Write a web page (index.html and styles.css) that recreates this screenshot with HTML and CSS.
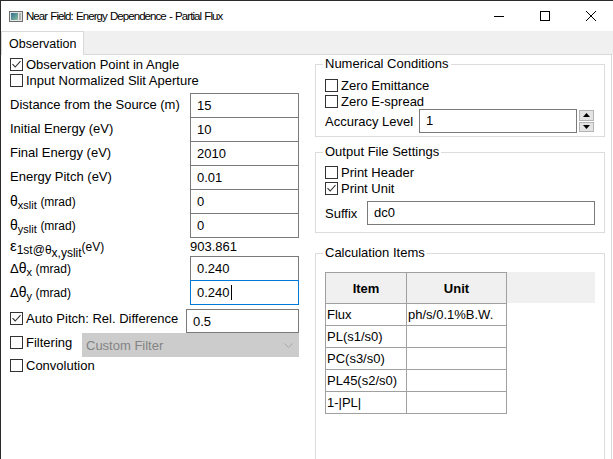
FILE: index.html
```html
<!DOCTYPE html>
<html>
<head>
<meta charset="utf-8">
<link rel="stylesheet" href="styles.css">
</head>
<body>
<div class="window">
  <div class="titlebar">
    <svg class="appicon" width="14" height="11" viewBox="0 0 14 11">
      <defs><linearGradient id="ig" x1="0" y1="0" x2="1" y2="1"><stop offset="0" stop-color="#2f6f8f"/><stop offset="1" stop-color="#8cc0a0"/></linearGradient></defs>
      <rect x="0.5" y="0.5" width="13" height="10" fill="#e6e6e6" stroke="#6d6d6d"/>
      <rect x="2" y="2" width="7" height="7" fill="url(#ig)"/>
      <rect x="10" y="2" width="2" height="7" fill="#b0b0b0"/>
    </svg>
    <span class="title">Near Field: Energy Dependence - Partial Flux</span>
    <div class="controls">
      <span class="ctl"><svg width="10" height="10" viewBox="0 0 10 10"><line x1="0" y1="5.5" x2="10" y2="5.5" stroke="#000"/></svg></span>
      <span class="ctl"><svg width="10" height="10" viewBox="0 0 10 10"><rect x="0.5" y="0.5" width="9" height="9" fill="none" stroke="#000"/></svg></span>
      <span class="ctl"><svg width="10" height="10" viewBox="0 0 10 10"><path d="M0 0 L10 10 M10 0 L0 10" stroke="#000" stroke-width="1"/></svg></span>
    </div>
  </div>
  <div class="tabstrip">
    <div class="tab">Observation</div>
    <div class="tabfill"></div>
  </div>
  <div class="panel">
    <div class="left">
      <label class="check"><span class="cb"><svg viewBox="0 0 11 11"><polyline points="1.5,5.2 4.2,8 9.5,2.2" fill="none" stroke="#333" stroke-width="1.1"/></svg></span>Observation Point in Angle</label>
      <label class="check"><span class="cb"></span>Input Normalized Slit Aperture</label>
      <div class="fields">
        <span class="lbl">Distance from the Source (m)</span><span class="input">15</span>
        <span class="lbl">Initial Energy (eV)</span><span class="input">10</span>
        <span class="lbl">Final Energy (eV)</span><span class="input">2010</span>
        <span class="lbl">Energy Pitch (eV)</span><span class="input">0.01</span>
        <span class="lbl"><span class="g">θ</span><sub class="s11">xslit</sub> <span class="sm">(mrad)</span></span><span class="input">0</span>
        <span class="lbl"><span class="g">θ</span><sub class="s11">yslit</sub> <span class="sm">(mrad)</span></span><span class="input">0</span>
        <span class="lbl"><span class="eps">ε</span><sub class="s12">1st@θ<sub class="s12">x,yslit</sub></sub><span class="sm">(eV)</span></span><span class="val">903.861</span>
        <span class="lbl">Δ<span class="g">θ</span><sub class="s11">x</sub> <span class="sm">(mrad)</span></span><span class="input">0.240</span>
        <span class="lbl">Δ<span class="g">θ</span><sub class="s11">y</sub> <span class="sm">(mrad)</span></span><span class="input focus">0.240<span class="caret"></span></span>
      </div>
      <div class="auto-row">
        <label class="check auto"><span class="cb"><svg viewBox="0 0 11 11"><polyline points="1.5,5.2 4.2,8 9.5,2.2" fill="none" stroke="#333" stroke-width="1.1"/></svg></span>Auto Pitch: Rel. Difference</label>
        <span class="input auto-in">0.5</span>
      </div>
      <div class="filter-row">
        <label class="check filt"><span class="cb"></span>Filtering</label>
        <span class="select">Custom Filter<svg class="chev" width="9" height="5" viewBox="0 0 9 5"><polyline points="0.5,0.5 4.5,4.5 8.5,0.5" fill="none" stroke="#a8a8a8"/></svg></span>
      </div>
      <label class="check"><span class="cb"></span>Convolution</label>
    </div>
    <div class="right">
      <fieldset class="group g1">
        <legend>Numerical Conditions</legend>
        <label class="check"><span class="cb"></span>Zero Emittance</label>
        <label class="check"><span class="cb"></span>Zero E-spread</label>
        <div class="acc-row">
          <span class="acc-lbl">Accuracy Level</span>
          <span class="input acc-in">1</span>
          <span class="spin">
            <span class="spbtn"><svg width="7" height="4" viewBox="0 0 7 4"><polygon points="0,4 3.5,0 7,4" fill="#000"/></svg></span>
            <span class="spbtn"><svg width="7" height="4" viewBox="0 0 7 4"><polygon points="0,0 3.5,4 7,0" fill="#000"/></svg></span>
          </span>
        </div>
      </fieldset>
      <fieldset class="group g2">
        <legend>Output File Settings</legend>
        <label class="check"><span class="cb"></span>Print Header</label>
        <label class="check"><span class="cb"><svg viewBox="0 0 11 11"><polyline points="1.5,5.2 4.2,8 9.5,2.2" fill="none" stroke="#333" stroke-width="1.1"/></svg></span>Print Unit</label>
        <div class="suffix-row">
          <span class="suf-lbl">Suffix</span>
          <span class="input suf-in">dc0</span>
        </div>
      </fieldset>
      <fieldset class="group g3">
        <legend>Calculation Items</legend>
        <div class="tablewrap">
          <table class="items">
            <thead>
              <tr><th class="c1">Item</th><th class="c2">Unit</th></tr>
            </thead>
            <tbody>
              <tr><td>Flux</td><td>ph/s/0.1%B.W.</td></tr>
              <tr><td>PL(s1/s0)</td><td></td></tr>
              <tr><td>PC(s3/s0)</td><td></td></tr>
              <tr><td>PL45(s2/s0)</td><td></td></tr>
              <tr><td>1-|PL|</td><td></td></tr>
            </tbody>
          </table>
        </div>
      </fieldset>
    </div>
  </div>
</div>
</body>
</html>
```

FILE: styles.css
```css
* { box-sizing: border-box; }
html, body { margin: 0; padding: 0; overflow: hidden; background: #fff; }
body { font-family: "Liberation Sans", Arial, sans-serif; font-size: 13px; color: #000; }

.window {
  width: 614px;
  height: 480px;
  border-top: 1px solid #2b2b2b;
  border-left: 1px solid #2b2b2b;
  display: flex;
  flex-direction: column;
  background: #fff;
}

.titlebar { height: 30px; flex: none; display: flex; align-items: center; padding-left: 8px; }
.appicon { flex: none; display: block; }
.title { margin-left: 3px; font-size: 11.5px; letter-spacing: -0.95px; word-spacing: 1px; white-space: nowrap; color: #000; }
.controls { margin-left: auto; display: flex; height: 30px; flex: none; }
.ctl { width: 46px; height: 30px; display: flex; align-items: center; justify-content: center; flex: none; }
.ctl svg { display: block; }

.tabstrip { height: 24px; flex: none; display: flex; background: #f0f0f0; }
.tab {
  width: 83px; height: 24px; background: #fff;
  border: 1px solid #d9d9d9; border-bottom: none;
  padding-left: 7px; display: flex; align-items: center;
  font-size: 12.5px;
}
.tabfill { flex: 1; border-bottom: 1px solid #d9d9d9; margin-right: 2px; }

.panel { flex: 1; display: flex; border-right: 1px solid #d9d9d9; margin-right: 2px; overflow: hidden; }

.left { width: 314px; flex: none; padding: 1px 0 0 9px; }
.right { width: 290px; flex: none; display: flex; flex-direction: column; }

.check { display: flex; align-items: center; height: 16px; white-space: nowrap; }
.cb {
  width: 13px; height: 13px; border: 1px solid #333; background: #fff;
  flex: none; margin-right: 3px; display: flex;
}
.cb svg { width: 11px; height: 11px; display: block; }

.fields {
  margin-top: 5px;
  display: grid;
  grid-template-columns: 180px 109px;
  grid-template-rows: repeat(6, 24px) 19px 24px 24px;
}
.lbl { align-self: center; line-height: 16px; white-space: nowrap; }
.g { font-size: 14px; }
.eps { font-size: 15px; }
.sm { font-size: 12px; }
sub { vertical-align: -3px; line-height: 0; }
.s11 { font-size: 11px; }
.s12 { font-size: 12px; }
.val { align-self: center; line-height: 16px; }

.input {
  height: 25px; border: 1px solid #7a7a7a; background: #fff;
  padding: 0 0 1px 6px; display: flex; align-items: center; white-space: nowrap;
}
.input.focus { border-color: #0078d7; position: relative; }
.caret { display: inline-block; width: 1px; height: 15px; background: #000; margin-left: 1px; }

.auto-row { margin-top: 5px; display: flex; height: 24px; }
.check.auto { width: 176px; margin-top: 1px; }
.auto-in { width: 113px; height: 24px; padding-top: 1px; }

.filter-row { display: flex; height: 24px; }
.check.filt { width: 72px; margin-top: 1px; }
.select {
  width: 217px; height: 24px; background: #cccccc; color: #838383;
  display: flex; align-items: center; padding-left: 4px;
}
.chev { margin-left: auto; margin-right: 6px; display: block; }

.group { margin: 0; border: 1px solid #dcdcdc; min-width: 0; padding: 0 0 0 9px; }
.group legend { padding: 0 2px; margin-left: -2px; line-height: 16px; height: 16px; }
.g1 { margin-top: 1px; padding-top: 5px; padding-bottom: 3px; }
.g2 { margin-top: 7px; padding-top: 4px; padding-bottom: 7px; }
.g3 { margin-top: 12px; padding-top: 11px; flex: 1; }

.acc-row { display: flex; height: 24px; align-items: center; }
.acc-lbl { width: 94px; }
.acc-in { width: 158px; height: 24px; }
.spin { width: 15px; height: 24px; margin-left: 2px; padding: 1px 0; display: flex; flex-direction: column; gap: 1px; }
.spbtn { flex: 1; background: #e3e3e3; border: 1px solid #b4b4b4; display: flex; align-items: center; justify-content: center; }
.spbtn svg { display: block; }

.suffix-row { margin-top: 5px; display: flex; height: 24px; align-items: center; }
.suf-lbl { width: 42px; }
.suf-in { width: 228px; height: 24px; }

.tablewrap {
  width: 270px;
  background: linear-gradient(#f0f0f0, #f0f0f0) no-repeat left top / 100% 31px;
}
.items { border-collapse: collapse; width: 181px; table-layout: fixed; font-size: 13px; }
.items .c1 { width: 81px; }
.items .c2 { width: 100px; }
.items th {
  height: 31px; background: #f0f0f0; border: 1px solid #a0a0a0;
  font-weight: bold; text-align: center; padding: 0;
}
.items td { height: 22px; border: 1px solid #a0a0a0; padding: 0 0 0 1px; white-space: nowrap; }
```
